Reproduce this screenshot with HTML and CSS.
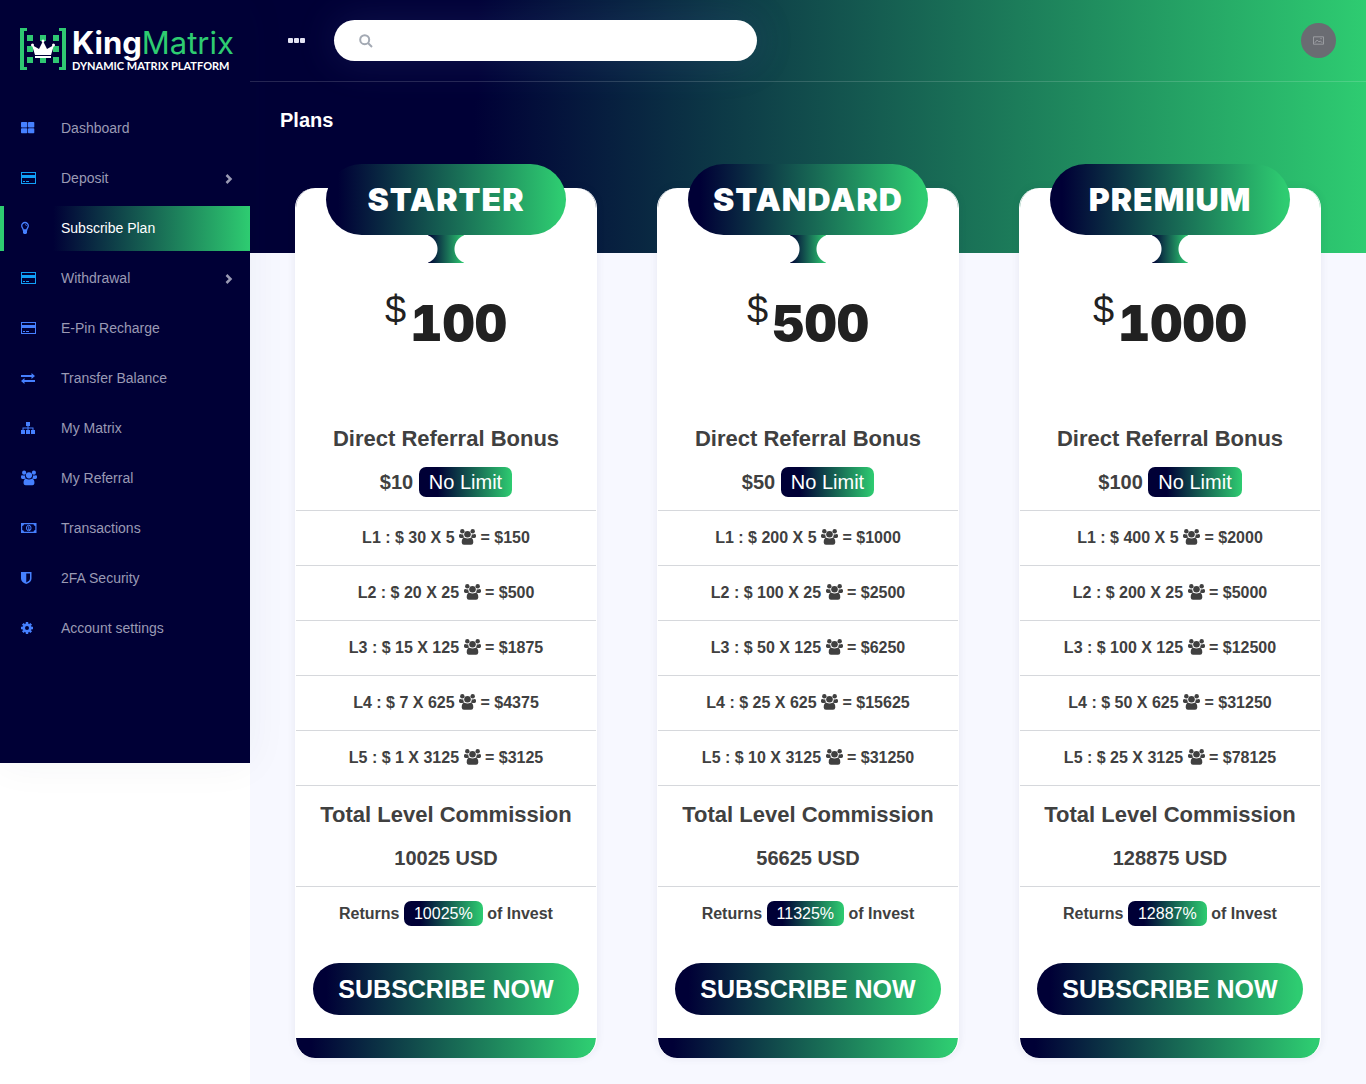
FILE: index.html
```html
<!DOCTYPE html>
<html lang="en">
<head>
    <meta charset="UTF-8">
    <meta name="viewport" content="width=device-width, initial-scale=1.0">
    <title>Plans</title>
    <link rel="stylesheet" href="styles.css">
</head>
<body>
    <!-- shared icons -->
    <svg class="sprite" aria-hidden="true">
        <symbol id="i-grid" viewBox="0 0 16 16"><rect x="0" y="2" width="6.300" height="5.500" rx=".8"/><rect x="7" y="2" width="6.300" height="5.500" rx=".8"/><rect x="0" y="8.300" width="6.300" height="5" rx=".8"/><rect x="7" y="8.300" width="6.300" height="5" rx=".8"/></symbol>
        <symbol id="i-card" viewBox="0 0 16 16"><path fill-rule="evenodd" d="M0 2h15v12H0zM1 3v2h13V3zM1 8v5h13V8zM2 11h2v1H2zM5 11h3v1H5z"/></symbol>
        <symbol id="i-bulb" viewBox="0 0 16 16"><path d="M4 2.500a3.300 3.300 0 0 0-3.300 3.300C.700 7.500 2 8 2.300 10h3.400c.3-2 1.600-2.500 1.600-4.200A3.300 3.300 0 0 0 4 2.500z" fill="none" stroke="currentColor" stroke-width="1.300"/><path d="M2 10h4v3l-1 1H3l-1-1z"/><path d="M4 4.500q1.500 0 1.500 1.500" fill="none" stroke="currentColor" stroke-width=".7"/></symbol>
        <symbol id="i-swap" viewBox="0 0 16 16"><path d="M0 5h10.500V3L14 6l-3.500 3V7H0zM14 10H3.500V8L0 11l3.500 3v-2H14z"/></symbol>
        <symbol id="i-tree" viewBox="0 0 16 16"><path d="M5 2h4v4H7.500v1.500H12.500V10H14v4h-4v-4h1.500V8.500h-4V10H9v4H5v-4h1.500V8.500h-4V10H4v4H0v-4h1.500V7.500h5V6H5z"/></symbol>
        <symbol id="i-users" viewBox="0 0 17 16"><circle cx="3.300" cy="2.300" r="2.200"/><circle cx="13.700" cy="2.300" r="2.200"/><circle cx="8.500" cy="5.200" r="3.300"/><path d="M0 7.500V6.500Q.2 4.700 1.200 5q1.500.7 3 .3 0 2 1 3.300Q4 8.600 3.300 9H1.500Q0 8.900 0 7.500zM17 7.500V6.500q-.2-1.800-1.200-1.500-1.500.7-3 .3 0 2-1 3.300 1.200 0 1.900.4h1.800Q17 8.900 17 7.500zM2.700 13.500Q2.600 9 5.500 8.800q3 1.400 6 0 2.900.2 2.800 4.700-.2 2.300-2.200 2.300H4.900q-2 0-2.200-2.300z"/></symbol>
        <symbol id="i-money" viewBox="0 0 16 16"><path fill-rule="evenodd" d="M0 3h15.500v10H0zM3 4.200Q2.800 5.800 1.200 6v4q1.600.2 1.800 1.800h9.500q.2-1.600 1.800-1.800V6q-1.600-.2-1.800-1.800z"/><ellipse cx="7.750" cy="8" rx="2.300" ry="2.800" fill="none" stroke="currentColor"/><path d="M7.300 6.300h1V9H9v.8H6.800V9h.5z"/></symbol>
        <symbol id="i-shield" viewBox="0 0 16 16"><path fill-rule="evenodd" d="M0 2h10.500v6.500Q10.500 12 5.250 14 0 12 0 8.500zM5.250 3.500v9Q9 10.800 9 8.500v-5z"/></symbol>
        <symbol id="i-gear" viewBox="0 0 16 16"><circle cx="6" cy="8" r="3.300" fill="none" stroke="currentColor" stroke-width="2.600"/><path d="M6 2v12M0 8h12M1.800 3.800l8.400 8.400M10.200 3.800l-8.400 8.400" fill="none" stroke="currentColor" stroke-width="2.400" stroke-dasharray="2 8 2"/></symbol>
        <symbol id="i-right" viewBox="0 0 8 10"><path d="M1.500 1l4 4-4 4" fill="none" stroke="currentColor" stroke-width="2.500"/></symbol>
    </svg>

    <div class="page">
        <aside class="sidebar">
            <a class="brand" href="#" aria-label="KingMatrix">
                <svg class="brand-mark" viewBox="0 0 46 42" aria-hidden="true">
                    <path class="green" d="M0 0h7v3H4v36h3v3H0zM46 0h-7v3h3v36h-3v3h7z"/>
                    <path class="green" d="M7 7h6v6H7zM20 7h6v6h-6zM33 7h6v6h-6zM7 18h6v6H7zM33 18h6v6h-6zM7 29h6v6H7zM20 30h6v5h-6zM33 29h6v6h-6z"/>
                    <path class="white" d="M12 17l7 4 4-8 4 8 7-4-3 10H15zM15 28h16v2H15z"/>
                    <circle class="white" cx="12.500" cy="17" r="1.500"/><circle class="white" cx="23" cy="13" r="1.500"/><circle class="white" cx="33.500" cy="17" r="1.500"/>
                </svg>
                <span class="brand-text">
                    <span class="brand-name"><b>King</b>Matrix</span>
                    <span class="brand-tag">DYNAMIC MATRIX PLATFORM</span>
                </span>
            </a>
            <nav class="menu">
                <a href="#"><svg><use href="#i-grid"/></svg>Dashboard</a>
                <a class="cyan" href="#"><svg><use href="#i-card"/></svg>Deposit<svg class="arrow"><use href="#i-right"/></svg></a>
                <a class="active" href="#"><svg><use href="#i-bulb"/></svg>Subscribe Plan</a>
                <a class="cyan" href="#"><svg><use href="#i-card"/></svg>Withdrawal<svg class="arrow"><use href="#i-right"/></svg></a>
                <a href="#"><svg><use href="#i-card"/></svg>E-Pin Recharge</a>
                <a href="#"><svg><use href="#i-swap"/></svg>Transfer Balance</a>
                <a href="#"><svg><use href="#i-tree"/></svg>My Matrix</a>
                <a href="#"><svg><use href="#i-users"/></svg>My Referral</a>
                <a href="#"><svg><use href="#i-money"/></svg>Transactions</a>
                <a href="#"><svg><use href="#i-shield"/></svg>2FA Security</a>
                <a href="#"><svg><use href="#i-gear"/></svg>Account settings</a>
            </nav>
        </aside>

        <main class="content">
            <header class="topbar">
                <button class="toggle" type="button" aria-label="Toggle menu"><i></i><i></i><i></i></button>
                <label class="search">
                    <svg viewBox="0 0 14 14" aria-hidden="true"><circle cx="5.700" cy="5.700" r="4.500"/><path d="M9 9l4 4"/></svg>
                    <input type="text" aria-label="Search">
                </label>
                <button class="avatar" type="button" aria-label="Profile">
                    <svg viewBox="0 0 12 9" aria-hidden="true"><path d="M.5.5h11v8H.5zM2 7l2.500-3 2 2 1.500-1 2 2M8 2.500h1.500"/></svg>
                </button>
            </header>
            <h1>Plans</h1>

            <div class="plans">
                <section class="plan">
                    <div class="plan-head"><h2>STARTER</h2><div class="stem"></div></div>
                    <div class="price"><sup>$</sup>100</div>
                    <ul>
                        <li class="bonus"><h3>Direct Referral Bonus</h3><h4>$10 <span class="tag">No Limit</span></h4></li>
                        <li>L1 : $ 30 X 5 <svg><use href="#i-users"/></svg> = $150</li>
                        <li>L2 : $ 20 X 25 <svg><use href="#i-users"/></svg> = $500</li>
                        <li>L3 : $ 15 X 125 <svg><use href="#i-users"/></svg> = $1875</li>
                        <li>L4 : $ 7 X 625 <svg><use href="#i-users"/></svg> = $4375</li>
                        <li>L5 : $ 1 X 3125 <svg><use href="#i-users"/></svg> = $3125</li>
                        <li class="total"><h3>Total Level Commission</h3><h4>10025 USD</h4></li>
                        <li class="returns">Returns <span class="tag">10025%</span> of Invest</li>
                    </ul>
                    <button class="subscribe" type="button">SUBSCRIBE NOW</button>
                </section>

                <section class="plan">
                    <div class="plan-head"><h2>STANDARD</h2><div class="stem"></div></div>
                    <div class="price"><sup>$</sup>500</div>
                    <ul>
                        <li class="bonus"><h3>Direct Referral Bonus</h3><h4>$50 <span class="tag">No Limit</span></h4></li>
                        <li>L1 : $ 200 X 5 <svg><use href="#i-users"/></svg> = $1000</li>
                        <li>L2 : $ 100 X 25 <svg><use href="#i-users"/></svg> = $2500</li>
                        <li>L3 : $ 50 X 125 <svg><use href="#i-users"/></svg> = $6250</li>
                        <li>L4 : $ 25 X 625 <svg><use href="#i-users"/></svg> = $15625</li>
                        <li>L5 : $ 10 X 3125 <svg><use href="#i-users"/></svg> = $31250</li>
                        <li class="total"><h3>Total Level Commission</h3><h4>56625 USD</h4></li>
                        <li class="returns">Returns <span class="tag">11325%</span> of Invest</li>
                    </ul>
                    <button class="subscribe" type="button">SUBSCRIBE NOW</button>
                </section>

                <section class="plan">
                    <div class="plan-head"><h2>PREMIUM</h2><div class="stem"></div></div>
                    <div class="price"><sup>$</sup>1000</div>
                    <ul>
                        <li class="bonus"><h3>Direct Referral Bonus</h3><h4>$100 <span class="tag">No Limit</span></h4></li>
                        <li>L1 : $ 400 X 5 <svg><use href="#i-users"/></svg> = $2000</li>
                        <li>L2 : $ 200 X 25 <svg><use href="#i-users"/></svg> = $5000</li>
                        <li>L3 : $ 100 X 125 <svg><use href="#i-users"/></svg> = $12500</li>
                        <li>L4 : $ 50 X 625 <svg><use href="#i-users"/></svg> = $31250</li>
                        <li>L5 : $ 25 X 3125 <svg><use href="#i-users"/></svg> = $78125</li>
                        <li class="total"><h3>Total Level Commission</h3><h4>128875 USD</h4></li>
                        <li class="returns">Returns <span class="tag">12887%</span> of Invest</li>
                    </ul>
                    <button class="subscribe" type="button">SUBSCRIBE NOW</button>
                </section>
            </div>
        </main>
    </div>
</body>
</html>
```
FILE: styles.css
```css
:root {
    --navy: #000036;
    --green: #2ecc71;
    --grad: linear-gradient(90deg, var(--navy) 20%, var(--green) 100%);
    --grad-wide: linear-gradient(90deg, var(--navy) 5%, var(--green) 98%);
}

* {
    box-sizing: border-box;
}

body {
    margin: 0;
    background: #fff;
    font-family: Arial, "Liberation Sans", sans-serif;
    color: #404040;
}

h1, h2, h3, h4, ul {
    margin: 0;
    padding: 0;
}

a {
    text-decoration: none;
}

button {
    border: 0;
    padding: 0;
    font-family: inherit;
    cursor: pointer;
}

.sprite {
    display: none;
}

.page {
    display: flex;
    align-items: flex-start;
    min-height: 100vh;
}

/* sidebar */
.sidebar {
    position: relative;
    width: 250px;
    flex: none;
    min-height: 763px;
    background: var(--navy);
    box-shadow: 0 0 40px rgba(40, 60, 80, 0.05);
}

.brand {
    display: flex;
    align-items: flex-start;
    gap: 6px;
    padding: 28px 0 0 20px;
    height: 106px;
    color: #fff;
}

.brand-mark {
    width: 46px;
    height: 42px;
}

.green {
    fill: #2fc872;
}

.white {
    fill: #fff;
}

.brand-text {
    display: flex;
    flex-direction: column;
}

.brand-name {
    font-family: Inter, sans-serif;
    font-size: 31px;
    line-height: 30px;
    color: var(--green);
}

.brand-name b {
    color: #fff;
}

.brand-tag {
    padding-top: 2px;
    font-family: Lato, sans-serif;
    font-size: 11px;
    font-weight: 700;
    line-height: 12px;
    white-space: nowrap;
}

.menu a {
    display: flex;
    align-items: center;
    height: 45px;
    margin-bottom: 5px;
    padding: 0 17px 2px;
    border-left: 4px solid transparent;
    font-size: 14px;
    color: #9a9ab4;
}

.menu svg {
    width: 16px;
    height: 16px;
    margin-right: 24px;
    color: #4680ff;
    fill: currentColor;
}

.menu .cyan svg {
    color: #11a0f8;
}

.menu .arrow,
.menu .cyan .arrow {
    width: 8px;
    height: 10px;
    margin: 2px 0 0 auto;
    color: #9a9ab4;
}

.menu .active {
    border-left-color: var(--green);
    background: var(--grad);
    color: #fff;
}

/* content */
.content {
    flex: 1;
    min-width: 0;
    min-height: 100vh;
    padding-bottom: 26px;
    background: var(--grad) no-repeat 0 0 / 100% 253px, #f7f8ff;
}

.topbar {
    display: flex;
    align-items: center;
    height: 82px;
    padding: 0 30px 0 38px;
    border-bottom: 1px solid rgba(255, 255, 255, 0.15);
}

.toggle {
    display: flex;
    gap: 1px;
    margin-right: 29px;
    background: none;
}

.toggle i {
    width: 5px;
    height: 5px;
    border-radius: 1px;
    background: #e4e4f4;
}

.search {
    display: flex;
    align-items: center;
    width: 423px;
    height: 41px;
    padding: 0 25px;
    border-radius: 21px;
    background: #fff;
    box-shadow: 0 0 40px rgba(80, 100, 170, 0.2);
}

.search svg {
    width: 14px;
    height: 14px;
    flex: none;
    fill: none;
    stroke: #a3a9b3;
    stroke-width: 2;
}

.search input {
    flex: 1;
    min-width: 0;
    margin-left: 10px;
    border: 0;
    outline: 0;
    background: none;
    font-size: 14px;
}

.avatar {
    display: flex;
    align-items: center;
    justify-content: center;
    width: 35px;
    height: 35px;
    margin-left: auto;
    border-radius: 50%;
    background: #6a6c72;
}

.avatar svg {
    width: 11px;
    height: 9px;
    fill: none;
    stroke: #a0a2a6;
}

h1 {
    padding: 26px 30px 32px;
    font-size: 20px;
    line-height: 24px;
    color: #fff;
}

.plans {
    display: grid;
    grid-template-columns: repeat(3, 1fr);
    gap: 60px;
    padding: 24px 45px 0;
}

.plan {
    display: flex;
    flex-direction: column;
    align-items: center;
    border: solid #fff;
    border-width: 0 1px;
    border-radius: 20px;
    background: var(--grad-wide) no-repeat bottom / 100% 20px, #fff;
    background-clip: padding-box;
    box-shadow: 0 0 8px rgba(40, 40, 90, 0.08);
    text-align: center;
    padding-bottom: 43px;
}

.plan-head {
    display: flex;
    flex-direction: column;
    align-items: center;
    margin-top: -24px;
}

.plan h2 {
    width: 240px;
    border-radius: 36px;
    background: var(--grad-wide);
    font-family: "Arial Black", Inter, sans-serif;
    font-weight: 900;
    font-size: 32px;
    line-height: 71px;
    letter-spacing: 1px;
    color: #fff;
}

.stem {
    width: 36px;
    height: 28px;
    background: radial-gradient(circle at -5px 50%, #fff 14px, transparent 15px), radial-gradient(circle at 41px 50%, #fff 14px, transparent 15px), linear-gradient(90deg, var(--navy), var(--green));
}

.price {
    height: 155px;
    padding-top: 20px;
    font-family: "Arial Black", Inter, sans-serif;
    font-weight: 900;
    font-size: 50px;
    font-variant-numeric: tabular-nums;
    line-height: 80px;
    color: #212121;
}

.price sup {
    margin-right: 4px;
    font-family: Arial, "Liberation Sans", sans-serif;
    font-weight: 400;
    font-size: 38px;
    line-height: 1px;
}

.plan ul {
    width: 100%;
    list-style: none;
}

.plan li {
    height: 55px;
    border-top: 1px solid #d6d8dc;
    font-size: 16px;
    line-height: 53px;
    font-weight: 700;
}

.plan li svg {
    width: 17px;
    height: 16px;
    vertical-align: -2px;
    fill: currentColor;
}

.plan h3 {
    font-size: 22px;
    line-height: 28px;
}

.plan h4 {
    font-size: 20px;
    line-height: 30px;
}

.plan .bonus {
    height: 92px;
    padding-top: 7px;
    border-top: 0;
}

.bonus h4 {
    margin-top: 14px;
}

.plan .total {
    height: 101px;
    padding-top: 15px;
}

.total h4 {
    margin-top: 14px;
}

.tag {
    display: inline-block;
    padding: 0 10px;
    border-radius: 7px;
    background: var(--grad);
    line-height: 30px;
    font-weight: 400;
    color: #fff;
}

.returns .tag {
    line-height: 25px;
}

.subscribe {
    width: 266px;
    height: 52px;
    margin-top: 22px;
    border-radius: 26px;
    background: var(--grad-wide);
    font-size: 25px;
    font-weight: 700;
    color: #fff;
}
```
